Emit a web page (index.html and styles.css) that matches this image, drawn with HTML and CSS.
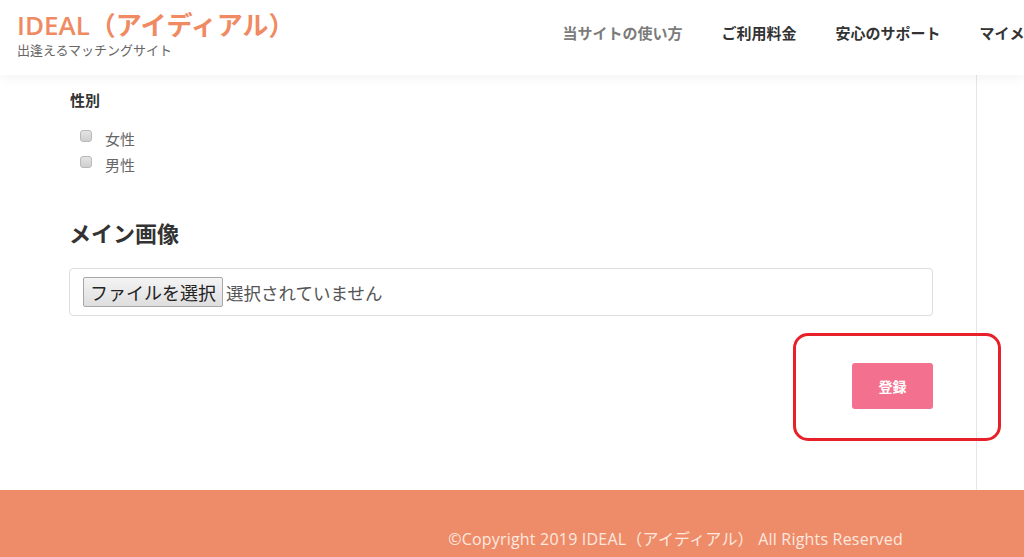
FILE: index.html
```html
<!DOCTYPE html>
<html lang="ja">
<head>
<meta charset="utf-8">
<title>IDEAL（アイディアル）</title>
<link rel="stylesheet" href="styles.css">
</head>
<body>
<header class="site-header">
  <div class="brand">
    <div class="logo">IDEAL（アイディアル）</div>
    <div class="tagline">出逢えるマッチングサイト</div>
  </div>
  <nav class="global-nav">
    <a class="nav-item nav-muted">当サイトの使い方</a>
    <a class="nav-item">ご利用料金</a>
    <a class="nav-item">安心のサポート</a>
    <a class="nav-item">マイメニュー</a>
  </nav>
</header>

<div class="layout">
  <main class="main">
    <div class="field-label">性別</div>
    <ul class="check-list">
      <li><input type="checkbox" class="check"><span>女性</span></li>
      <li><input type="checkbox" class="check"><span>男性</span></li>
    </ul>

    <h2 class="section-title">メイン画像</h2>
    <div class="file-box">
      <span class="file-btn">ファイルを選択</span>
      <span class="file-status">選択されていません</span>
    </div>

    <div class="submit-row">
      <div class="submit-wrap">
        <button class="submit-btn">登録</button>
        <div class="annotation"></div>
      </div>
    </div>
  </main>
  <aside class="sidebar"></aside>
</div>

<footer class="site-footer">
  <p class="copyright">©Copyright 2019 IDEAL（アイディアル） All Rights Reserved</p>
</footer>
</body>
</html>
```

FILE: styles.css
```css
* { box-sizing: border-box; }
html, body { margin: 0; padding: 0; }
body {
  font-family: "Noto Sans CJK JP", "Open Sans", sans-serif;
  color: #333;
  background: #fff;
  overflow: hidden;
  width: 1024px;
}

.site-header {
  height: 75px;
  display: flex;
  align-items: flex-start;
  white-space: nowrap;
  overflow: hidden;
  background: #fff;
  position: relative;
  z-index: 2;
  box-shadow: 0 3px 12px rgba(0,0,0,0.05);
}
.brand {
  flex: none;
  width: 543px;
  padding: 10px 0 0 17px;
}
.logo {
  font-family: "Open Sans", "Noto Sans CJK JP", sans-serif;
  font-size: 26px;
  font-weight: 600;
  line-height: 30px;
  color: #ef8a62;
}
.tagline {
  font-size: 13px;
  line-height: 16px;
  margin-top: 2px;
  color: #666;
}
.global-nav {
  display: flex;
  flex: none;
  padding-top: 22px;
}
.nav-item {
  padding: 0 19.5px;
  font-size: 15px;
  line-height: 22px;
  font-weight: 700;
  color: #333;
  text-decoration: none;
}
.nav-muted { color: #7b7b7b; }

.layout {
  display: flex;
}
.main {
  width: 977px;
  flex: none;
  border-right: 1px solid #e6e6e6;
  padding: 14px 43px 81px 69px;
}
.sidebar { flex: 1; }

.field-label {
  font-size: 15px;
  font-weight: 700;
  line-height: 22px;
  padding-left: 1px;
  color: #333;
}
.check-list {
  list-style: none;
  margin: 14px 0 0;
  padding: 0 0 0 11px;
}
.check-list li {
  display: flex;
  align-items: center;
  height: 26px;
  font-size: 15px;
  color: #666;
}
.check {
  appearance: none;
  -webkit-appearance: none;
  width: 12px;
  height: 12px;
  margin: -4px 13px 0 0;
  border: 1px solid #b9b9b9;
  border-radius: 3px;
  background: linear-gradient(#e4e4e4, #cfcfcf);
}

.section-title {
  margin: 39px 0 0;
  font-size: 22px;
  line-height: 32px;
  font-weight: 700;
  color: #333;
}

.file-box {
  margin-top: 20px;
  height: 48px;
  border: 1px solid #ddd;
  border-radius: 4px;
  display: flex;
  align-items: center;
  padding-left: 13px;
}
.file-btn {
  height: 30px;
  padding: 0 6px;
  display: flex;
  align-items: center;
  font-size: 18px;
  color: #222;
  border: 1px solid #a8a8a8;
  border-radius: 2px;
  background: linear-gradient(#f4f4f4, #dedede);
}
.file-status {
  margin-left: 3px;
  font-size: 17.5px;
  color: #555;
}

.submit-row {
  display: flex;
  justify-content: flex-end;
  margin-top: 47px;
}
.submit-wrap { position: relative; }
.submit-btn {
  width: 81px;
  height: 46px;
  border: none;
  border-radius: 3px;
  background: #f3718e;
  color: #fff;
  font-family: "Noto Sans CJK JP", sans-serif;
  font-size: 14px;
  font-weight: 700;
  display: block;
}
.annotation {
  position: absolute;
  left: -59px;
  top: -30px;
  width: 208px;
  height: 108px;
  border: 3px solid #e8202a;
  border-radius: 15px;
  pointer-events: none;
}

.site-footer {
  background: #ee8c6a;
  height: 80px;
  display: flex;
  justify-content: flex-end;
  padding: 38px 121px 0 0;
}
.copyright {
  margin: 0;
  font-family: "Open Sans", "Noto Sans CJK JP", sans-serif;
  font-size: 16px;
  letter-spacing: 0.2px;
  line-height: 22px;
  color: #fde8df;
}
```
